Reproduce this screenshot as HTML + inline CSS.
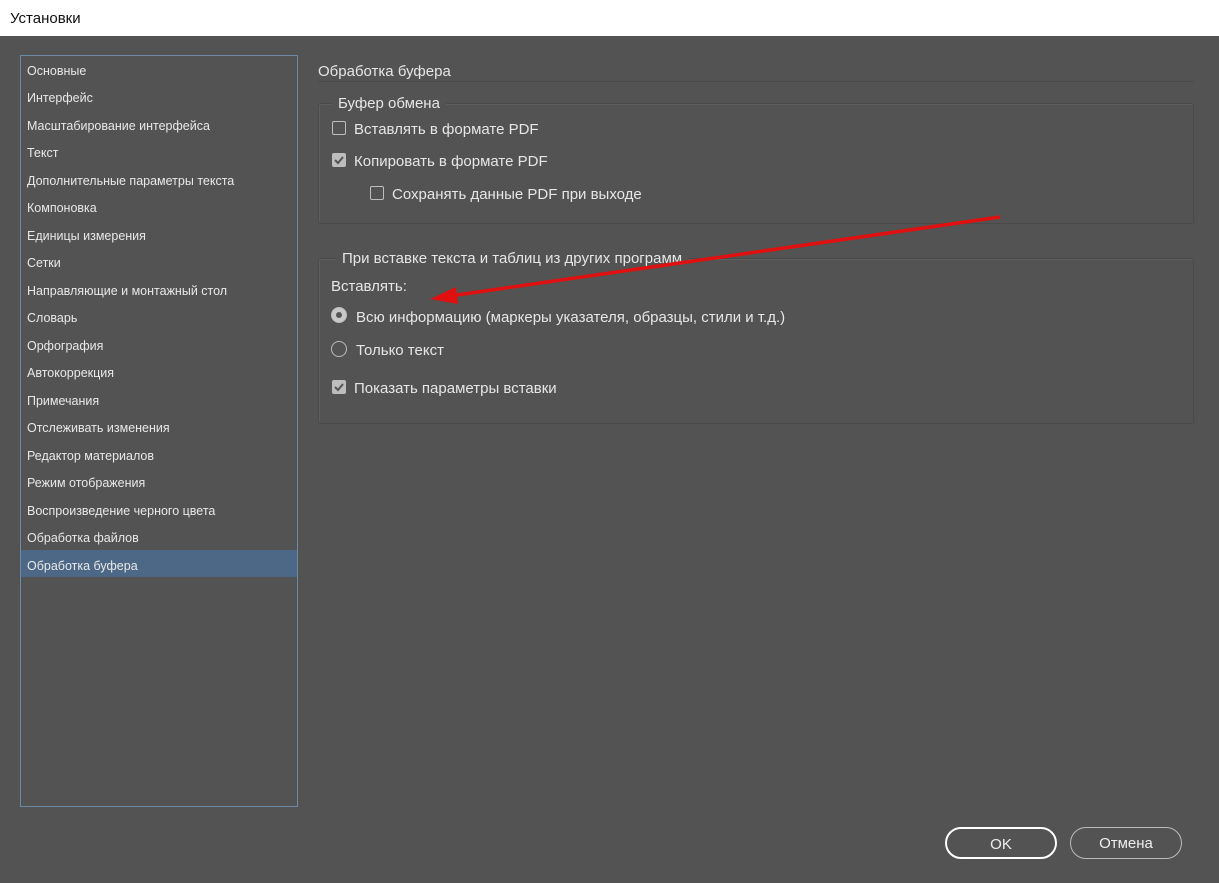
<!DOCTYPE html>
<html><head><meta charset="utf-8"><style>
*{margin:0;padding:0;box-sizing:border-box}
body{width:1219px;height:883px;background:#535353;font-family:"Segoe UI","Liberation Sans","DejaVu Sans",sans-serif;color:#e6e6e6;position:relative;overflow:hidden}
.title{position:absolute;left:0;top:0;width:1219px;height:36px;background:#fff;color:#111;font-size:15px;padding:10px 0 0 10px}
.side{position:absolute;left:20px;top:55px;width:278px;height:752px;border:1px solid #6c8aa8;}
.side div{position:absolute;left:0;width:276px;height:27px;font-size:12.5px;padding:7px 0 0 6px;color:#e8e8e8}
.side div.sel{background:#4c6886;padding-top:9px}
.a{position:absolute;font-size:15px;white-space:nowrap;margin-top:3px}
.grp{position:absolute;border:1px solid #4a4a4a;border-radius:3px;box-shadow:inset 1px 1px 0 #5e5e5e}
.leg{position:absolute;background:#535353;padding:0 6px;font-size:15px;margin-top:3px}
.cb{position:absolute;width:14px;height:14px;border:1px solid #bdbdbd;border-radius:2px}
.cb.on{background:#bdbdbd}
.rb{position:absolute;width:16px;height:16px;border:1px solid #bdbdbd;border-radius:50%}
.rb.on{background:#c8c8c8}
.rb.on:after{content:"";position:absolute;left:4px;top:4px;width:6px;height:6px;border-radius:50%;background:#555}
.btn{position:absolute;height:32px;border-radius:16px;font-size:15px;text-align:center;line-height:31px;color:#eee}
</style></head><body>
<div class="title">Установки</div>
<div class="side">
<div style="top:1px">Основные</div>
<div style="top:28px">Интерфейс</div>
<div style="top:56px">Масштабирование интерфейса</div>
<div style="top:83px">Текст</div>
<div style="top:111px">Дополнительные параметры текста</div>
<div style="top:138px">Компоновка</div>
<div style="top:166px">Единицы измерения</div>
<div style="top:193px">Сетки</div>
<div style="top:221px">Направляющие и монтажный стол</div>
<div style="top:248px">Словарь</div>
<div style="top:276px">Орфография</div>
<div style="top:303px">Автокоррекция</div>
<div style="top:331px">Примечания</div>
<div style="top:358px">Отслеживать изменения</div>
<div style="top:386px">Редактор материалов</div>
<div style="top:413px">Режим отображения</div>
<div style="top:441px">Воспроизведение черного цвета</div>
<div style="top:468px">Обработка файлов</div>
<div class="sel" style="top:494px">Обработка буфера</div>
</div>
<div class="a" style="left:318px;top:60px">Обработка буфера</div>
<div style="position:absolute;left:318px;top:81px;width:876px;height:1px;background:#4a4a4a"></div>
<div class="grp" style="left:318px;top:103px;width:876px;height:121px"></div>
<div class="leg" style="left:332px;top:92px">Буфер обмена</div>
<div class="cb" style="left:332px;top:121px"></div><div class="a" style="left:354px;top:118px">Вставлять в формате PDF</div>
<div class="cb on" style="left:332px;top:153px"><svg width="12" height="12" style="position:absolute;left:0;top:0"><path d="M2 6l3 3 5-6" stroke="#555" stroke-width="2" fill="none"/></svg></div><div class="a" style="left:354px;top:150px">Копировать в формате PDF</div>
<div class="cb" style="left:370px;top:186px"></div><div class="a" style="left:392px;top:183px">Сохранять данные PDF при выходе</div>
<div class="grp" style="left:318px;top:258px;width:876px;height:166px"></div>
<div class="leg" style="left:336px;top:247px">При вставке текста и таблиц из других программ</div>
<div class="a" style="left:331px;top:275px">Вставлять:</div>
<div class="rb on" style="left:331px;top:307px"></div><div class="a" style="left:356px;top:306px">Всю информацию (маркеры указателя, образцы, стили и т.д.)</div>
<div class="rb" style="left:331px;top:341px"></div><div class="a" style="left:356px;top:339px">Только текст</div>
<div class="cb on" style="left:332px;top:380px"><svg width="12" height="12" style="position:absolute;left:0;top:0"><path d="M2 6l3 3 5-6" stroke="#555" stroke-width="2" fill="none"/></svg></div><div class="a" style="left:354px;top:377px">Показать параметры вставки</div>
<svg style="position:absolute;left:0;top:0" width="1219" height="883"><line x1="1000" y1="217" x2="450" y2="296" stroke="#e01010" stroke-width="3.5"/><path d="M430 299 L456 287 L458 304 Z" fill="#e01010"/></svg>
<div class="btn" style="left:945px;top:827px;width:112px;border:2px solid #fff">OK</div>
<div class="btn" style="left:1070px;top:827px;width:112px;border:1px solid #bbb;line-height:32px">Отмена</div>
</body></html>
